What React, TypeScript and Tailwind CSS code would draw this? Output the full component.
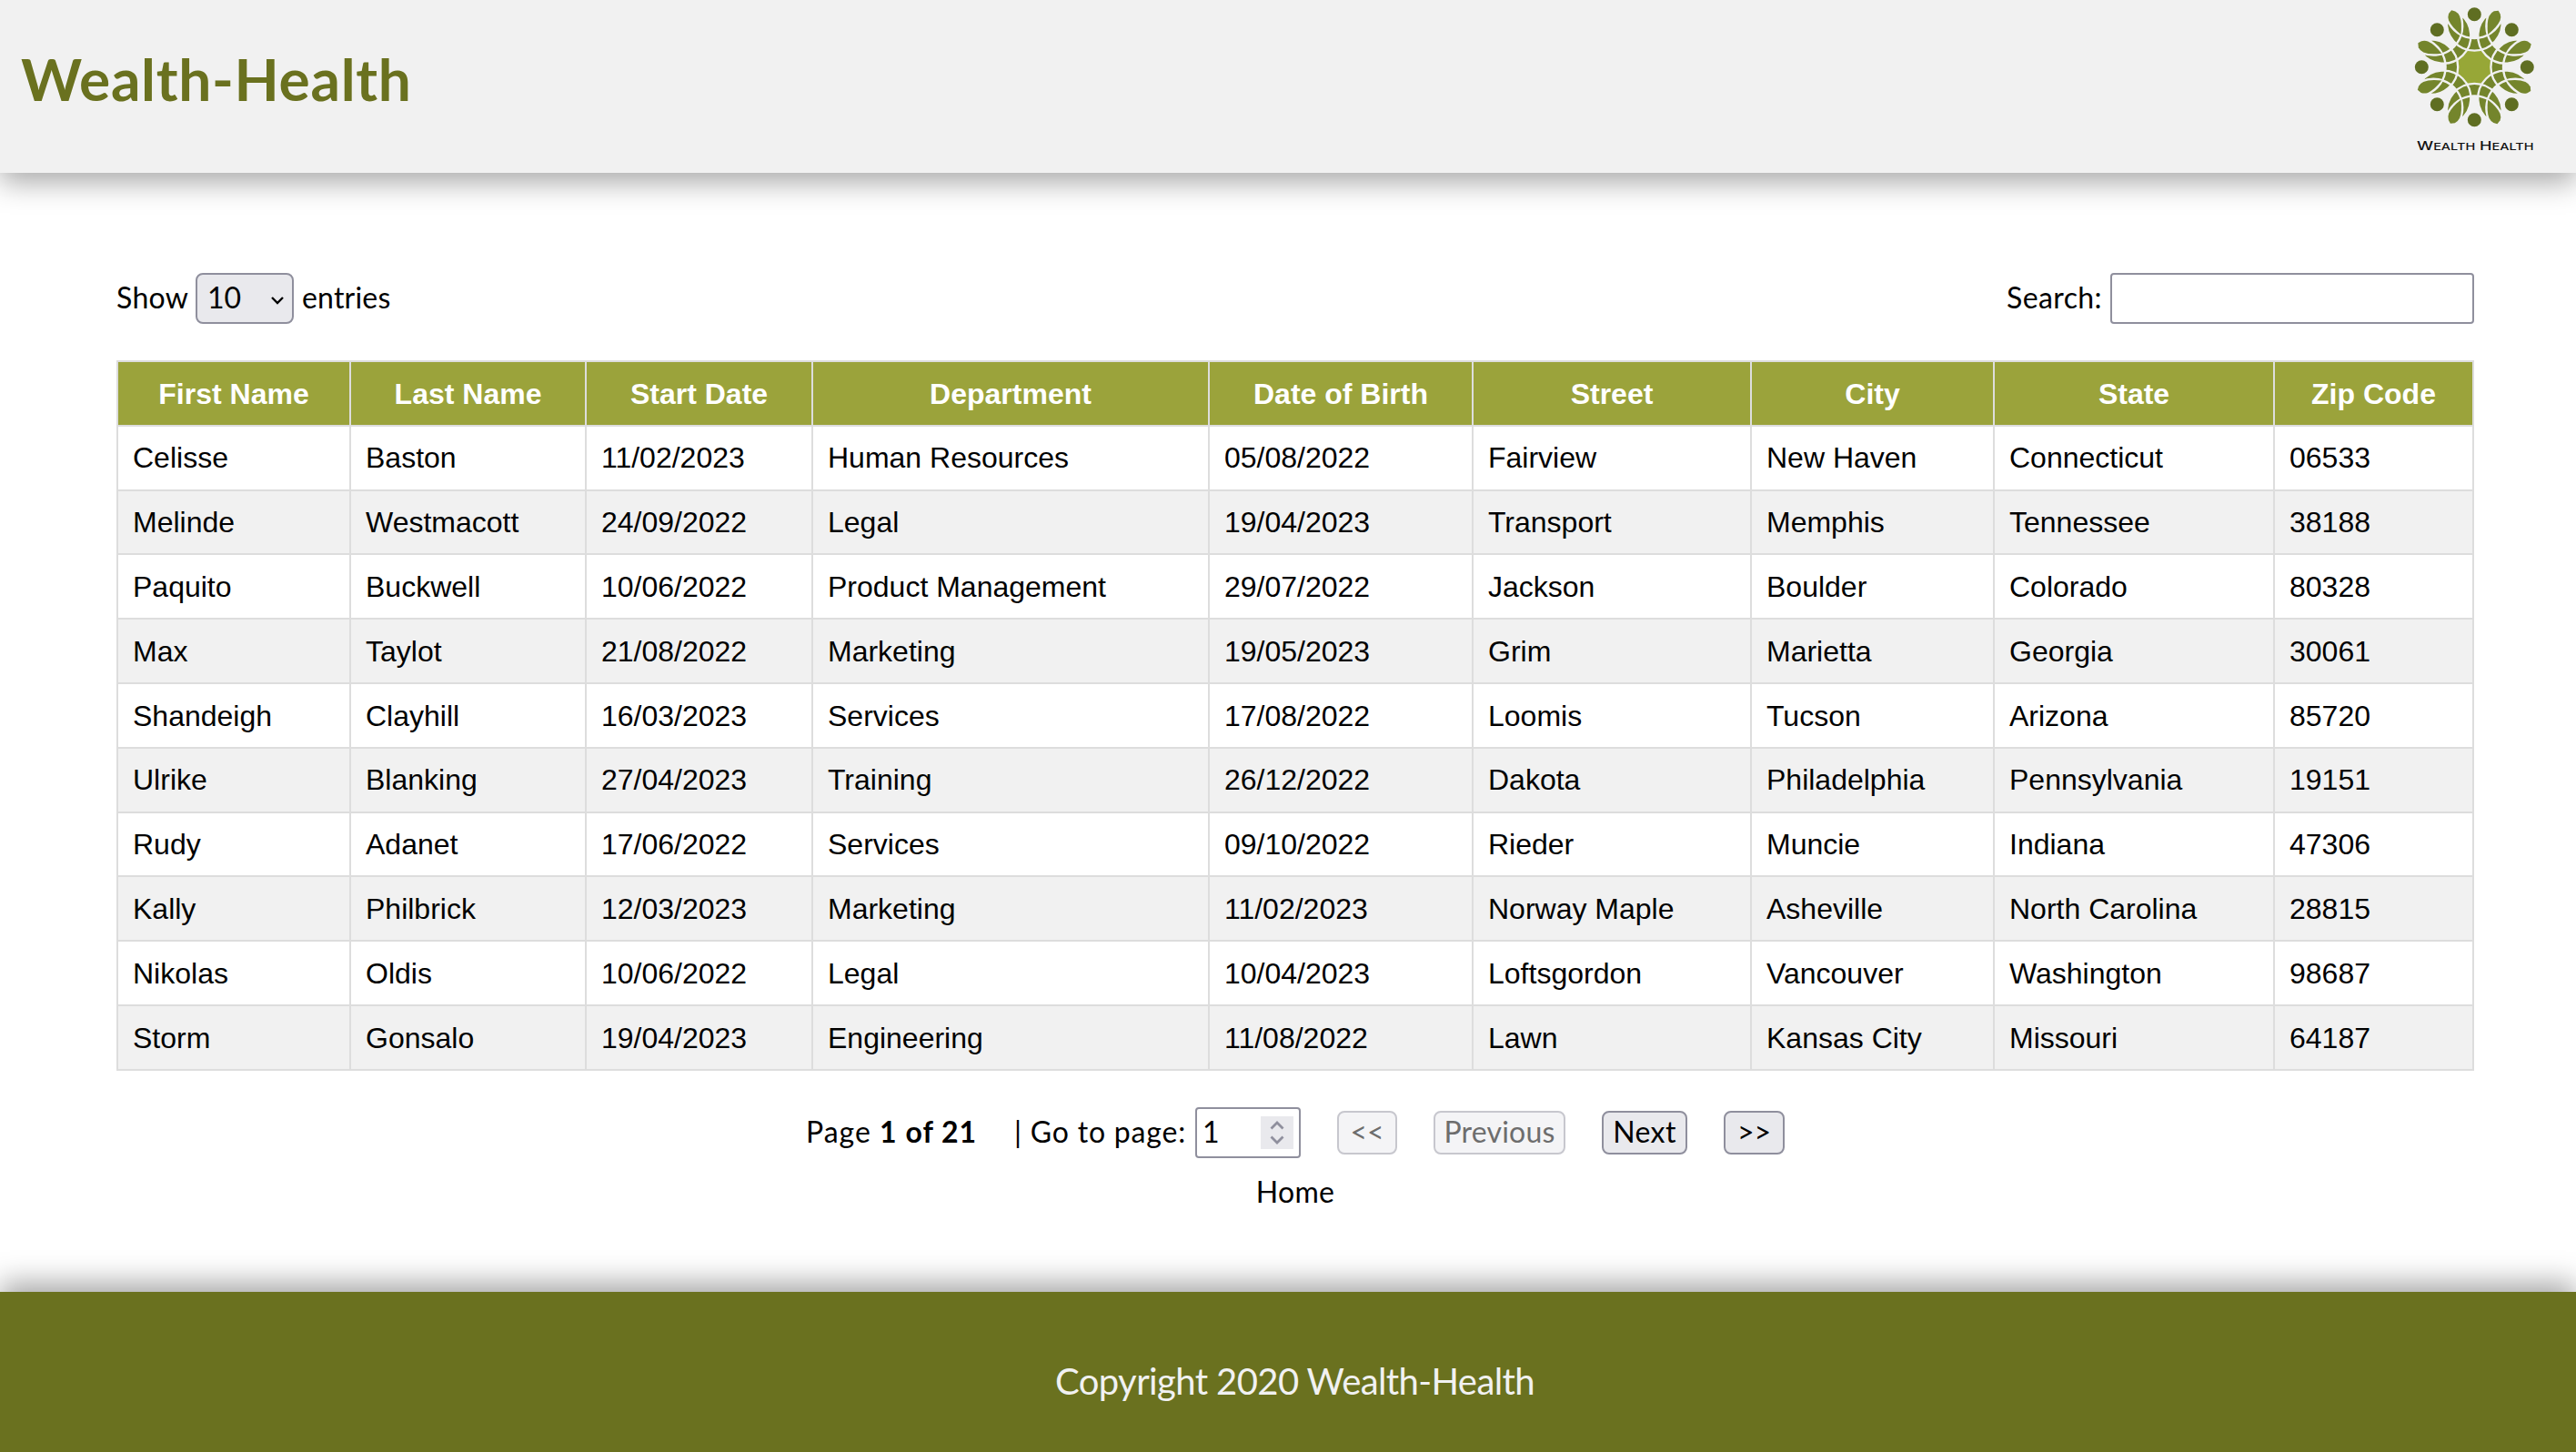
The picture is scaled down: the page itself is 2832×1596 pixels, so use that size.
import React from "react";

const columns = [
  { label: "First Name", width: "w-[256px]" },
  { label: "Last Name", width: "w-[259px]" },
  { label: "Start Date", width: "w-[249px]" },
  { label: "Department", width: "w-[436px]" },
  { label: "Date of Birth", width: "w-[290px]" },
  { label: "Street", width: "w-[306px]" },
  { label: "City", width: "w-[267px]" },
  { label: "State", width: "w-[308px]" },
  { label: "Zip Code", width: "w-[219px]" },
];

const employees = [
  ["Celisse", "Baston", "11/02/2023", "Human Resources", "05/08/2022", "Fairview", "New Haven", "Connecticut", "06533"],
  ["Melinde", "Westmacott", "24/09/2022", "Legal", "19/04/2023", "Transport", "Memphis", "Tennessee", "38188"],
  ["Paquito", "Buckwell", "10/06/2022", "Product Management", "29/07/2022", "Jackson", "Boulder", "Colorado", "80328"],
  ["Max", "Taylot", "21/08/2022", "Marketing", "19/05/2023", "Grim", "Marietta", "Georgia", "30061"],
  ["Shandeigh", "Clayhill", "16/03/2023", "Services", "17/08/2022", "Loomis", "Tucson", "Arizona", "85720"],
  ["Ulrike", "Blanking", "27/04/2023", "Training", "26/12/2022", "Dakota", "Philadelphia", "Pennsylvania", "19151"],
  ["Rudy", "Adanet", "17/06/2022", "Services", "09/10/2022", "Rieder", "Muncie", "Indiana", "47306"],
  ["Kally", "Philbrick", "12/03/2023", "Marketing", "11/02/2023", "Norway Maple", "Asheville", "North Carolina", "28815"],
  ["Nikolas", "Oldis", "10/06/2022", "Legal", "10/04/2023", "Loftsgordon", "Vancouver", "Washington", "98687"],
  ["Storm", "Gonsalo", "19/04/2023", "Engineering", "11/08/2022", "Lawn", "Kansas City", "Missouri", "64187"],
];

const turns = [0, 45, 90, 135, 180, 225, 270, 315];
const body = "M-90 -158 A90.9 90.9 0 1 0 90 -158 A95.8 95.8 0 0 1 -90 -158 Z";
const leaf =
  "M2 -202 L-11 -195 Q-19 -186 -19.500 -174 Q-19 -150 0 -117 Q19 -150 19.500 -174 Q19 -186 12 -194 Z";

function Logo() {
  return (
    <svg className="h-[190px] w-[200px]" viewBox="0 0 200 190" aria-label="Wealth Health">
      <g transform="translate(88.3 73.7) scale(0.3333)">
        <circle r="60" fill="#97a737" />
        {turns.map((t) => (
          <path key={t} d={body} transform={`rotate(${t})`} fill="#74852c" />
        ))}
        {turns.map((t) => (
          <path key={t} d={body} transform={`rotate(${t})`} fill="none" stroke="#f1f1f1" strokeWidth="7" strokeLinejoin="round" />
        ))}
        {turns.map((t) => (
          <path key={t} d={leaf} transform={`rotate(${t + 22.5})`} fill="#74852c" />
        ))}
        {turns.map((t) => (
          <circle key={t} cy="-174" r="22.5" transform={`rotate(${t})`} fill="#5f6e22" />
        ))}
      </g>
      <text x="25" y="164.5" fontFamily="Inter, sans-serif" fontWeight="500" fontSize="12.5" textLength="128.5" lengthAdjust="spacingAndGlyphs" fill="#111111">
        W<tspan fontSize="10">EALTH</tspan> H<tspan fontSize="10">EALTH</tspan>
      </text>
    </svg>
  );
}

function PageButton({ label, box, disabled }: { label: string; box: string; disabled?: boolean }) {
  return (
    <button
      disabled={disabled}
      className={`${box} flex h-12 items-center justify-center rounded-lg border-2 border-[#8f8f9d] bg-[#e9e9ed] pb-[2px] leading-none whitespace-nowrap disabled:border-[#c7c7ce] disabled:bg-[#f4f4f6] disabled:text-[#6d6d6d]`}
    >
      {label}
    </button>
  );
}

export default function App() {
  return (
    <div className="flex h-[1596px] w-[2832px] flex-col overflow-hidden bg-white font-['Lato',sans-serif] text-[32px] leading-none text-black">
      <header className="flex h-[190px] shrink-0 items-start justify-between bg-[#f1f1f1] shadow-[0_10px_30px_rgba(0,0,0,0.35)]">
        <h1 className="mt-[55px] ml-[23px] text-[64px] leading-none font-bold tracking-[0.7px] text-[#6a711f]">Wealth-Health</h1>
        <Logo />
      </header>

      <main className="flex grow flex-col pt-[110px] pr-[112px] pl-[128px]">
        <div className="flex h-14 w-[2592px] items-center justify-between">
          <label className="flex h-14 items-center">
            <span className="w-[87px] pb-[3px] tracking-[0.3px]">Show</span>
            <span className="relative flex">
              <select className="h-14 w-[108px] appearance-none rounded-lg border-2 border-[#8f8f9d] bg-[#e9e9ed] pb-[3px] pl-[11px]">
                <option>10</option>
              </select>
              <svg className="absolute top-[25px] right-[10px] h-3 w-4" viewBox="0 0 16 12" fill="none" stroke="#000" strokeWidth="2.4">
                <path d="M2 2 L8 8 L14 2" />
              </svg>
            </span>
            <span className="pb-[3px] pl-[9px] tracking-[0.2px]">entries</span>
          </label>
          <label className="flex h-14 items-center">
            <span className="pr-[9px] pb-[3px] tracking-[0.4px]">Search:</span>
            <input className="h-14 w-[400px] rounded border-2 border-[#8f8f9d] bg-white px-2" />
          </label>
        </div>

        <table className="mt-10 w-[2592px] table-fixed border-collapse font-['Liberation_Sans',Arial,sans-serif]">
          <colgroup>
            {columns.map((c) => (
              <col key={c.label} className={c.width} />
            ))}
          </colgroup>
          <thead>
            <tr className="h-[70.8px] bg-[#9ba33b] text-white">
              {columns.map((c) => (
                <th key={c.label} className="border-2 border-[#dddddd] px-0 pt-px pb-0 text-center font-bold">
                  {c.label}
                </th>
              ))}
            </tr>
          </thead>
          <tbody>
            {employees.map((row) => (
              <tr key={row[0]} className="h-[70.8px] even:bg-[#f1f1f1]">
                {row.map((cell, i) => (
                  <td key={i} className="border-2 border-[#dddddd] px-4 pt-[0.5px] pb-0 whitespace-nowrap">
                    {cell}
                  </td>
                ))}
              </tr>
            ))}
          </tbody>
        </table>

        <div className="mt-10 flex h-14 w-[2592px] items-center pl-[758px]">
          <span className="w-[229px] pb-[2px] tracking-[1px] whitespace-nowrap">
            Page <strong className="font-bold">1 of 21</strong>
          </span>
          <span className="w-[199px] pb-[2px] tracking-[0.8px] whitespace-nowrap">| Go to page:</span>
          <span className="relative flex">
            <input defaultValue="1" className="h-14 w-[116px] rounded border-2 border-[#8f8f9d] bg-white pb-[2px] pl-[6px]" />
            <span className="absolute top-[10px] right-2 flex h-9 w-9 items-center justify-center bg-[#e9e9ed]">
              <svg className="h-[26px] w-4" viewBox="0 0 16 26" fill="none" stroke="#8f8f9d" strokeWidth="2.8">
                <path d="M1.5 8.5 L8 2 L14.5 8.5 M1.5 17.5 L8 24 L14.5 17.5" />
              </svg>
            </span>
          </span>
          <div className="ml-10 flex gap-10">
            <PageButton label="<<" box="w-[66px]" disabled />
            <PageButton label="Previous" box="w-[145px] tracking-[0.2px]" disabled />
            <PageButton label="Next" box="w-[94px] tracking-[0.4px]" />
            <PageButton label=">>" box="w-[67px]" />
          </div>
        </div>
        <a className="mt-[21px] w-[2592px] text-center tracking-[0.3px]">Home</a>
      </main>

      <footer className="flex h-[176px] shrink-0 items-center justify-center bg-[#6a711f] pt-5 pl-[15px] text-[40px] tracking-[-0.6px] text-[#f1f1f1] shadow-[0_-10px_30px_rgba(0,0,0,0.35)]">
        Copyright 2020 Wealth-Health
      </footer>
    </div>
  );
}
